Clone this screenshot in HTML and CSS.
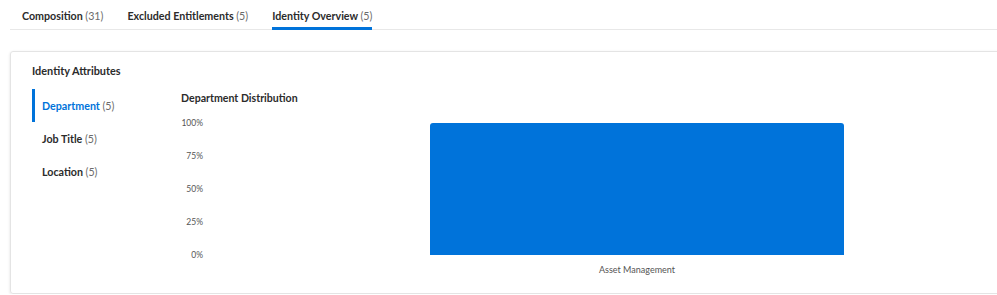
FILE: index.html
```html
<!DOCTYPE html>
<html lang="en">
<head>
    <meta charset="UTF-8">
    <meta name="viewport" content="width=device-width, initial-scale=1.0">
    <title>Identity Overview</title>
    <link rel="stylesheet" href="styles.css">
</head>
<body>
    <div class="tabs">
        <div class="tab">Composition <span class="count">(31)</span></div>
        <div class="tab">Excluded Entitlements <span class="count">(5)</span></div>
        <div class="tab active">Identity Overview <span class="count">(5)</span></div>
    </div>

    <div class="card">
        <h4 class="card-title">Identity Attributes</h4>
        <div class="card-body">
            <ul class="attr-nav">
                <li class="attr-item selected">Department <span class="count">(5)</span></li>
                <li class="attr-item">Job Title <span class="count">(5)</span></li>
                <li class="attr-item">Location <span class="count">(5)</span></li>
            </ul>
            <div class="chart">
                <h5 class="chart-title">Department Distribution</h5>
                <div class="chart-grid">
                    <div class="y-axis">
                        <span>100%</span>
                        <span>75%</span>
                        <span>50%</span>
                        <span>25%</span>
                        <span>0%</span>
                    </div>
                    <div class="plot">
                        <div class="bar" style="height: 100%"></div>
                    </div>
                    <div></div>
                    <div class="x-axis">Asset Management</div>
                </div>
            </div>
        </div>
    </div>
</body>
</html>
```

FILE: styles.css
```css
body {
    margin: 0;
    padding: 0 0 0 10px;
    font-family: 'Lato', 'Noto Sans', sans-serif;
    color: #2b2b2b;
    background-color: #ffffff;
    overflow: hidden;
}
.count {
    font-weight: normal;
    color: #6b6b6b;
}
.tabs {
    display: flex;
    gap: 24px;
    padding-left: 12px;
    border-bottom: 1px solid #e8e8e8;
}
.tab {
    font-size: 10.7px;
    font-weight: bold;
    line-height: 16px;
    padding: 8px 0 3px;
    border-bottom: 3px solid transparent;
    margin-bottom: -1px;
}
.tab.active {
    border-bottom-color: #0073da;
}
.card {
    width: 1032px;
    margin-top: 21px;
    border: 1px solid #e4e4e4;
    border-radius: 3px;
    box-shadow: 0 1px 3px rgba(0,0,0,0.12);
    padding: 11px 21px 17px;
}
.card-title {
    font-size: 10.9px;
    font-weight: bold;
    line-height: 16px;
    margin: 0 0 10px;
}
.card-body {
    display: flex;
}
.attr-nav {
    list-style: none;
    margin: 0;
    padding: 0;
    width: 149px;
}
.attr-item {
    font-size: 10.7px;
    font-weight: bold;
    height: 33px;
    line-height: 33px;
    padding-left: 7px;
    border-left: 3px solid transparent;
}
.attr-item.selected {
    color: #0073da;
    border-left-color: #0073da;
}
.chart {
    flex: 1;
}
.chart-title {
    font-size: 10.6px;
    font-weight: bold;
    line-height: 14px;
    margin: 2px 0 18px;
}
.chart-grid {
    display: grid;
    grid-template-columns: 29px 1fr;
    grid-template-rows: 132px auto;
}
.y-axis {
    display: flex;
    flex-direction: column;
    justify-content: space-between;
    align-items: flex-end;
    padding-right: 7px;
    font-size: 8.5px;
    line-height: 12px;
    color: #555555;
    margin: -6px 0;
}
.plot {
    display: flex;
    justify-content: center;
    align-items: flex-end;
}
.bar {
    width: 48.5%;
    background-color: #0073da;
    border-radius: 3px 3px 0 0;
}
.x-axis {
    text-align: center;
    font-size: 9px;
    line-height: 12px;
    color: #555555;
    padding-top: 9px;
}
```
